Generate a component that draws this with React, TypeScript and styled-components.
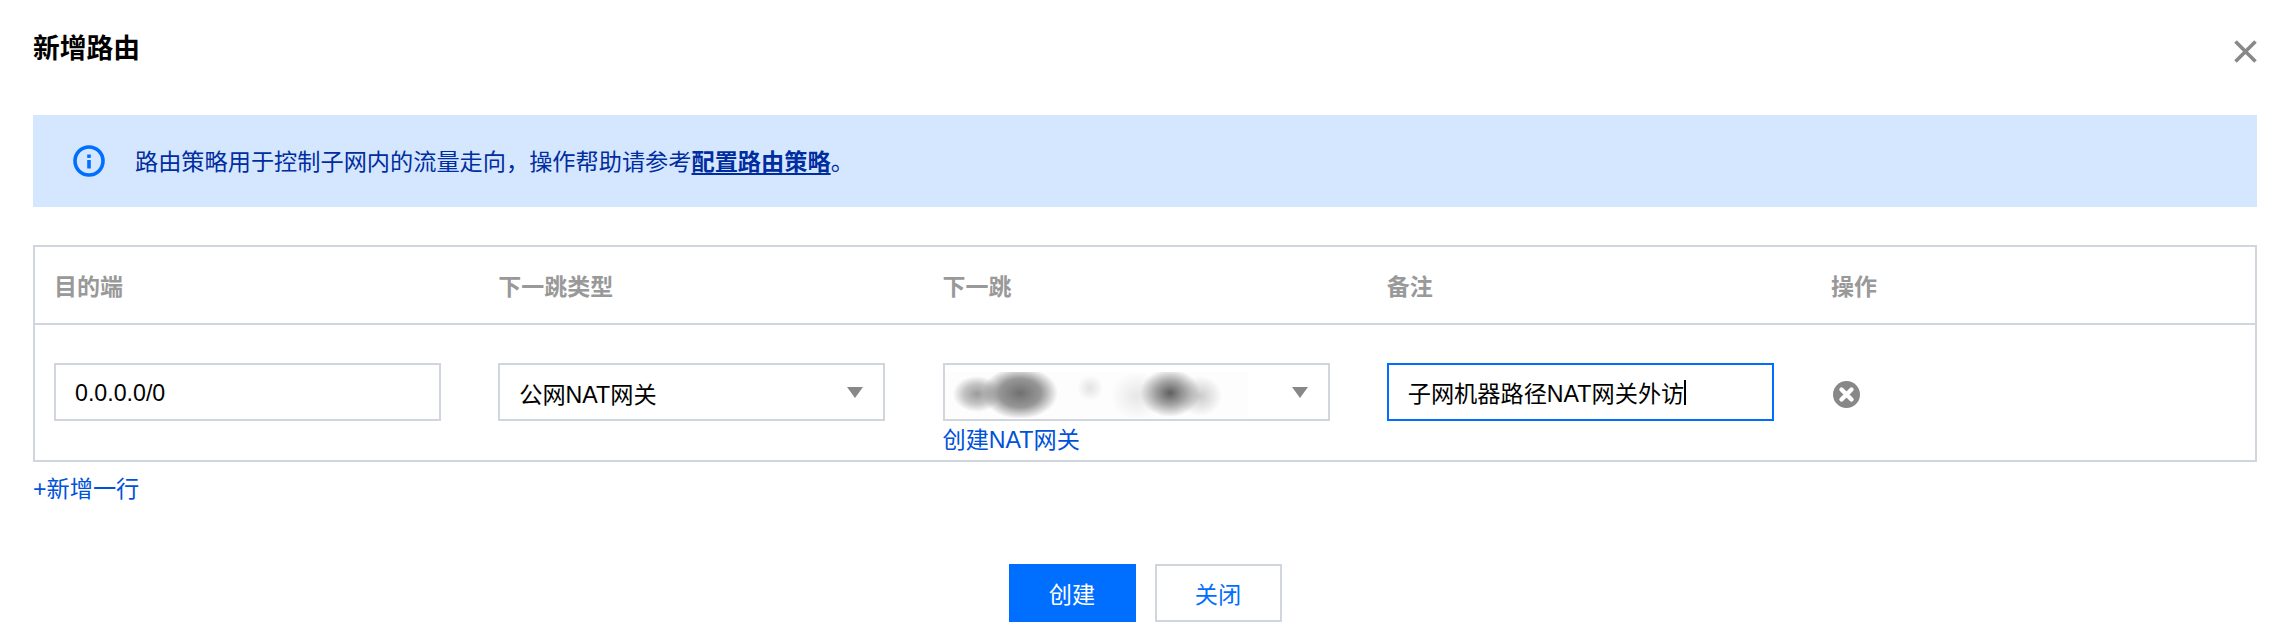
import styled, { createGlobalStyle } from "styled-components";

const GlobalStyle = createGlobalStyle`
  html, body {
    margin: 0;
    padding: 0;
    background: #fff;
  }
  body {
    font-family: "Liberation Sans", "Noto Sans CJK SC", sans-serif;
    font-size: 23.2px;
    color: #000;
  }
`;

const Dialog = styled.div`
  width: 2292px;
  height: 643px;
  box-sizing: border-box;
  padding: 0 35px 0 33px;
  overflow: hidden;
`;

const Header = styled.div`
  display: flex;
  align-items: center;
  justify-content: space-between;
  height: 97px;
  margin-bottom: 18px;
`;

const Title = styled.h3`
  margin: 0;
  font-size: 26.75px;
  font-weight: 700;
  line-height: 36px;
  color: #000;
`;

const CloseIcon = styled.svg`
  width: 23px;
  height: 23px;
  margin-top: 5px;
  stroke: #888;
  stroke-width: 3.6;
  fill: none;
`;

const Alert = styled.div`
  display: flex;
  align-items: center;
  gap: 31px;
  height: 92px;
  padding-left: 40px;
  margin-bottom: 38px;
  background: #d5e7ff;
  color: #002da0;
`;

const InfoIcon = styled.svg`
  width: 32px;
  height: 32px;
  flex: none;
`;

const AlertText = styled.span`
  margin-top: -2px;
  margin-left: -1px;
`;

const AlertLink = styled.a`
  font-weight: 700;
  color: #002da0;
  text-decoration: underline;
  text-underline-offset: 3px;
`;

const Table = styled.div`
  border: 2px solid #d0d5de;
  height: 217px;
  box-sizing: border-box;
`;

const Row = styled.div<{ $head?: boolean }>`
  display: grid;
  grid-template-columns: repeat(4, 444.25px) 1fr;
  padding-left: 19px;
  height: ${(p) => (p.$head ? "78px" : "135px")};
  box-sizing: border-box;
  align-items: ${(p) => (p.$head ? "center" : "start")};
  padding-top: ${(p) => (p.$head ? "0" : "38px")};
  border-bottom: ${(p) => (p.$head ? "2px solid #d0d5de" : "none")};
`;

const HeadCell = styled.div`
  font-size: 23px;
  font-weight: 700;
  color: #999;
`;

const Cell = styled.div`
  position: relative;
`;

const Field = styled.div<{ $focus?: boolean }>`
  position: relative;
  display: flex;
  align-items: center;
  width: 387px;
  height: 58px;
  box-sizing: border-box;
  padding: ${(p) => (p.$focus ? "0" : "2px")} 0 0 19px;
  border: 2px solid ${(p) => (p.$focus ? "#006eff" : "#d0d5de")};
  color: #000;
  white-space: nowrap;
`;

const Arrow = styled.span`
  position: absolute;
  right: 20px;
  top: 22px;
  width: 0;
  height: 0;
  border-left: 8px solid transparent;
  border-right: 8px solid transparent;
  border-top: 11px solid #888;
`;

const Caret = styled.span`
  display: inline-block;
  width: 2px;
  height: 25px;
  background: #000;
`;

const Blurred = styled.div`
  position: absolute;
  left: 0;
  top: 7px;
  width: 303px;
  height: 46px;
  background:
    radial-gradient(ellipse 38px 26px at 75px 21px, rgba(105, 105, 105, 0.95) 0%, rgba(125, 125, 125, 0.8) 55%, rgba(255, 255, 255, 0) 100%),
    radial-gradient(ellipse 30px 24px at 225px 21px, rgba(95, 95, 95, 1) 0%, rgba(135, 135, 135, 0.75) 50%, rgba(255, 255, 255, 0) 100%),
    radial-gradient(ellipse 24px 18px at 32px 22px, rgba(150, 150, 150, 0.95) 0%, rgba(165, 165, 165, 0.65) 55%, rgba(255, 255, 255, 0) 100%),
    radial-gradient(ellipse 22px 20px at 255px 24px, rgba(185, 185, 185, 0.75) 0%, rgba(255, 255, 255, 0) 100%),
    radial-gradient(ellipse 26px 24px at 192px 24px, rgba(225, 225, 225, 0.8) 0%, rgba(255, 255, 255, 0) 100%),
    radial-gradient(ellipse 13px 13px at 145px 16px, rgba(220, 220, 220, 0.8) 0%, rgba(255, 255, 255, 0) 100%),
    #fdfdfd;
`;

const CreateLink = styled.a`
  display: block;
  margin-top: 4px;
  line-height: 30px;
  color: #0052d9;
  white-space: nowrap;
`;

const DeleteIcon = styled.svg`
  display: block;
  width: 27px;
  height: 27px;
  margin-top: 18px;
  margin-left: 2px;
`;

const AddRow = styled.a`
  display: block;
  margin-top: 11px;
  line-height: 33px;
  color: #0052d9;
`;

const Footer = styled.div`
  display: flex;
  justify-content: center;
  gap: 19px;
  margin-top: 58px;
`;

const Button = styled.button<{ $primary?: boolean }>`
  width: 127px;
  height: 58px;
  box-sizing: border-box;
  padding: 0;
  font-family: inherit;
  font-size: 23.2px;
  border: 2px solid ${(p) => (p.$primary ? "#006eff" : "#d0d5de")};
  background: ${(p) => (p.$primary ? "#006eff" : "#fff")};
  color: ${(p) => (p.$primary ? "#fff" : "#006eff")};
`;

export default function App() {
  return (
    <>
      <GlobalStyle />
      <Dialog>
        <Header>
          <Title>新增路由</Title>
          <CloseIcon viewBox="0 0 23 23">
            <path d="M1.5 1.5 L21.5 21.5 M21.5 1.5 L1.5 21.5" />
          </CloseIcon>
        </Header>
        <Alert>
          <InfoIcon viewBox="0 0 32 32">
            <circle cx="16" cy="16" r="14" fill="none" stroke="#006eff" strokeWidth="3.6" />
            <rect x="14.2" y="9.5" width="3.6" height="3.4" fill="#006eff" />
            <rect x="14.2" y="15" width="3.6" height="8.5" fill="#006eff" />
          </InfoIcon>
          <AlertText>
            路由策略用于控制子网内的流量走向，操作帮助请参考<AlertLink>配置路由策略</AlertLink>。
          </AlertText>
        </Alert>
        <Table>
          <Row $head>
            <HeadCell>目的端</HeadCell>
            <HeadCell>下一跳类型</HeadCell>
            <HeadCell>下一跳</HeadCell>
            <HeadCell>备注</HeadCell>
            <HeadCell>操作</HeadCell>
          </Row>
          <Row>
            <Cell>
              <Field>0.0.0.0/0</Field>
            </Cell>
            <Cell>
              <Field>
                公网NAT网关
                <Arrow />
              </Field>
            </Cell>
            <Cell>
              <Field>
                <Blurred />
                <Arrow />
              </Field>
              <CreateLink>创建NAT网关</CreateLink>
            </Cell>
            <Cell>
              <Field $focus>
                子网机器路径NAT网关外访
                <Caret />
              </Field>
            </Cell>
            <Cell>
              <DeleteIcon viewBox="0 0 27 27">
                <circle cx="13.5" cy="13.5" r="13.5" fill="#888" />
                <path d="M8.5 8.5 L18.5 18.5 M18.5 8.5 L8.5 18.5" stroke="#fff" strokeWidth="4.4" strokeLinecap="round" />
              </DeleteIcon>
            </Cell>
          </Row>
        </Table>
        <AddRow>+新增一行</AddRow>
        <Footer>
          <Button $primary>创建</Button>
          <Button>关闭</Button>
        </Footer>
      </Dialog>
    </>
  );
}
